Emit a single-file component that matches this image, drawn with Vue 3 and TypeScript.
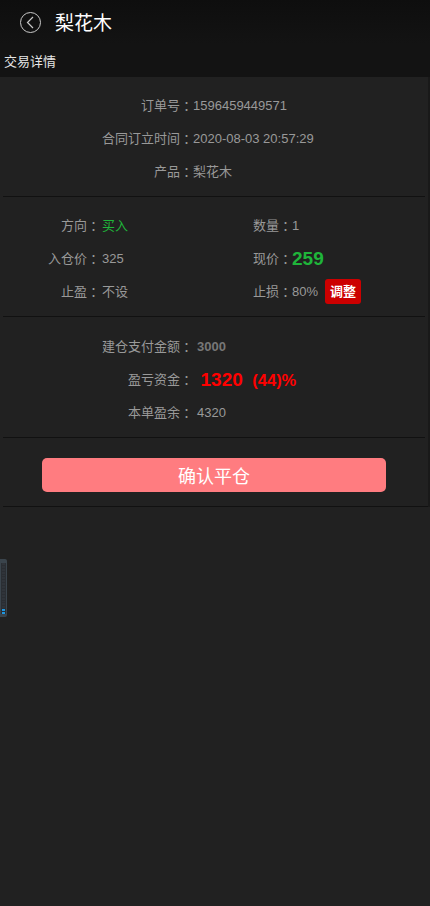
<script setup lang="ts">
interface Row { label: string; value: string }
const orderRows: Row[] = [
  { label: '订单号', value: '1596459449571' },
  { label: '合同订立时间', value: '2020-08-03 20:57:29' },
  { label: '产品', value: '梨花木' },
]
const segments = Array.from({ length: 18 })
</script>

<template>
  <div class="page">
    <header class="topbar">
      <svg class="back" width="21" height="21" viewBox="0 0 21 21" fill="none">
        <circle cx="10.5" cy="10.5" r="10" stroke="#c9c9c9" stroke-width="1" />
        <path d="M13 5 L7.5 10.5 L13 16" stroke="#c9c9c9" stroke-width="1.2" />
      </svg>
      <h1 class="title">梨花木</h1>
    </header>
    <div class="subhead">交易详情</div>

    <main class="panel">
      <section class="block order">
        <div v-for="r in orderRows" :key="r.label" class="row">
          <span class="label">{{ r.label }}<span class="colon">：</span></span><span class="val">{{ r.value }}</span>
        </div>
      </section>

      <section class="block trade">
        <div class="cell"><span class="label l1">方向<span class="colon">：</span></span><span class="green">买入</span></div>
        <div class="cell"><span class="label l2">数量<span class="colon">：</span></span><span class="val">1</span></div>
        <div class="cell"><span class="label l1">入仓价<span class="colon">：</span></span><span class="val">325</span></div>
        <div class="cell"><span class="label l2">现价<span class="colon">：</span></span><span class="price">259</span></div>
        <div class="cell"><span class="label l1">止盈<span class="colon">：</span></span><span class="val">不设</span></div>
        <div class="cell"><span class="label l2">止损<span class="colon">：</span></span><span class="val">80%</span><span class="adjust">调整</span></div>
      </section>

      <section class="block money">
        <div class="row"><span class="label m">建仓支付金额<span class="colon">：</span></span><span class="dim">3000</span></div>
        <div class="row">
          <span class="label m">盈亏资金<span class="colon">：</span></span><span class="red big">1320</span><span class="red pct">(44)%</span>
        </div>
        <div class="row"><span class="label m">本单盈余<span class="colon">：</span></span><span class="val">4320</span></div>
      </section>

      <section class="block action">
        <button class="confirm" type="button">确认平仓</button>
      </section>
    </main>

    <aside class="meter">
      <div class="track">
        <i v-for="(_, i) in segments" :key="i" :class="{ on: i >= 16 }"></i>
      </div>
    </aside>
  </div>
</template>

<style>
html, body { margin: 0; background: #212121; }
</style>

<style scoped>
.page {
  position: relative;
  width: 430px;
  height: 906px;
  overflow: hidden;
  background: #212121;
  font-family: "Liberation Sans", "Noto Sans CJK SC", sans-serif;
  font-size: 13px;
  color: #999;
}
.colon {
  font-family: "Noto Sans CJK TC", sans-serif;
  line-height: 1;
  vertical-align: -1px;
}
.topbar {
  height: 44px;
  display: flex;
  align-items: center;
  padding-left: 20px;
  box-sizing: border-box;
  background: linear-gradient(#0e0e0e, #131313);
}
.back { flex: none; }
.title {
  margin: 0 0 2px 14px;
  font-size: 19px;
  font-weight: 400;
  color: #fff;
}
.subhead {
  height: 33px;
  line-height: 35px;
  padding-left: 4px;
  background: #131313;
  color: #e6e6e6;
  font-size: 13px;
}
.panel {
  box-sizing: border-box;
  width: 430px;
  border-right: 2px solid #191919;
}
.block {
  margin: 0 3px 0 3px;
  border-bottom: 1px solid #111;
}
.order { padding-top: 12px; height: 120px; box-sizing: border-box; }
.row {
  height: 33px;
  line-height: 32px;
  display: flex;
  align-items: center;
}
.order .label { width: 190px; text-align: right; }
.trade {
  display: grid;
  grid-template-columns: 190px 1fr;
  grid-auto-rows: 33px;
  padding: 12px 0 8px;
}
.cell { display: flex; align-items: center; height: 33px; line-height: 32px; }
.l1 { width: 97px; margin-right: 2px; text-align: right; flex: none; }
.l2 { width: 99px; text-align: right; flex: none; }
.green { color: #1fb53a; }
.price { color: #1fb53a; font-size: 19px; font-weight: 700; }
.adjust {
  margin-left: 7px;
  width: 36px;
  height: 25px;
  line-height: 25px;
  text-align: center;
  background: #cc0000;
  border-radius: 3px;
  color: #fff;
  font-weight: 700;
}
.money { padding: 13px 0 8px; }
.m { width: 190px; margin-right: 4px; text-align: right; flex: none; }
.dim { color: #777; font-weight: 700; }
.red { color: #f00; font-weight: 700; }
.big { font-size: 19px; margin-left: 3.5px; }
.pct { font-size: 16.5px; margin-left: 9.5px; }
.action { margin-right: 0; padding: 20px 0 14px 39px; }
.confirm {
  display: block;
  width: 344px;
  height: 34px;
  padding: 0;
  border: 0;
  border-radius: 5px;
  background: #ff7c80;
  color: #fff;
  font: inherit;
  font-size: 18px;
}
.meter {
  position: absolute;
  left: 0;
  top: 559px;
  width: 7px;
  height: 58px;
  background: #3a444c;
  border-radius: 0 2px 2px 0;
  box-sizing: border-box;
  padding: 4px 1px 3px 1px;
}
.track {
  height: 100%;
  background: #2a2e33;
  display: flex;
  flex-direction: column;
  justify-content: flex-end;
  gap: 1px;
}
.track i { display: block; flex: 1; background: #30343a; margin: 0 1px; }
.track i.on { background: #1e96e0; }
</style>
